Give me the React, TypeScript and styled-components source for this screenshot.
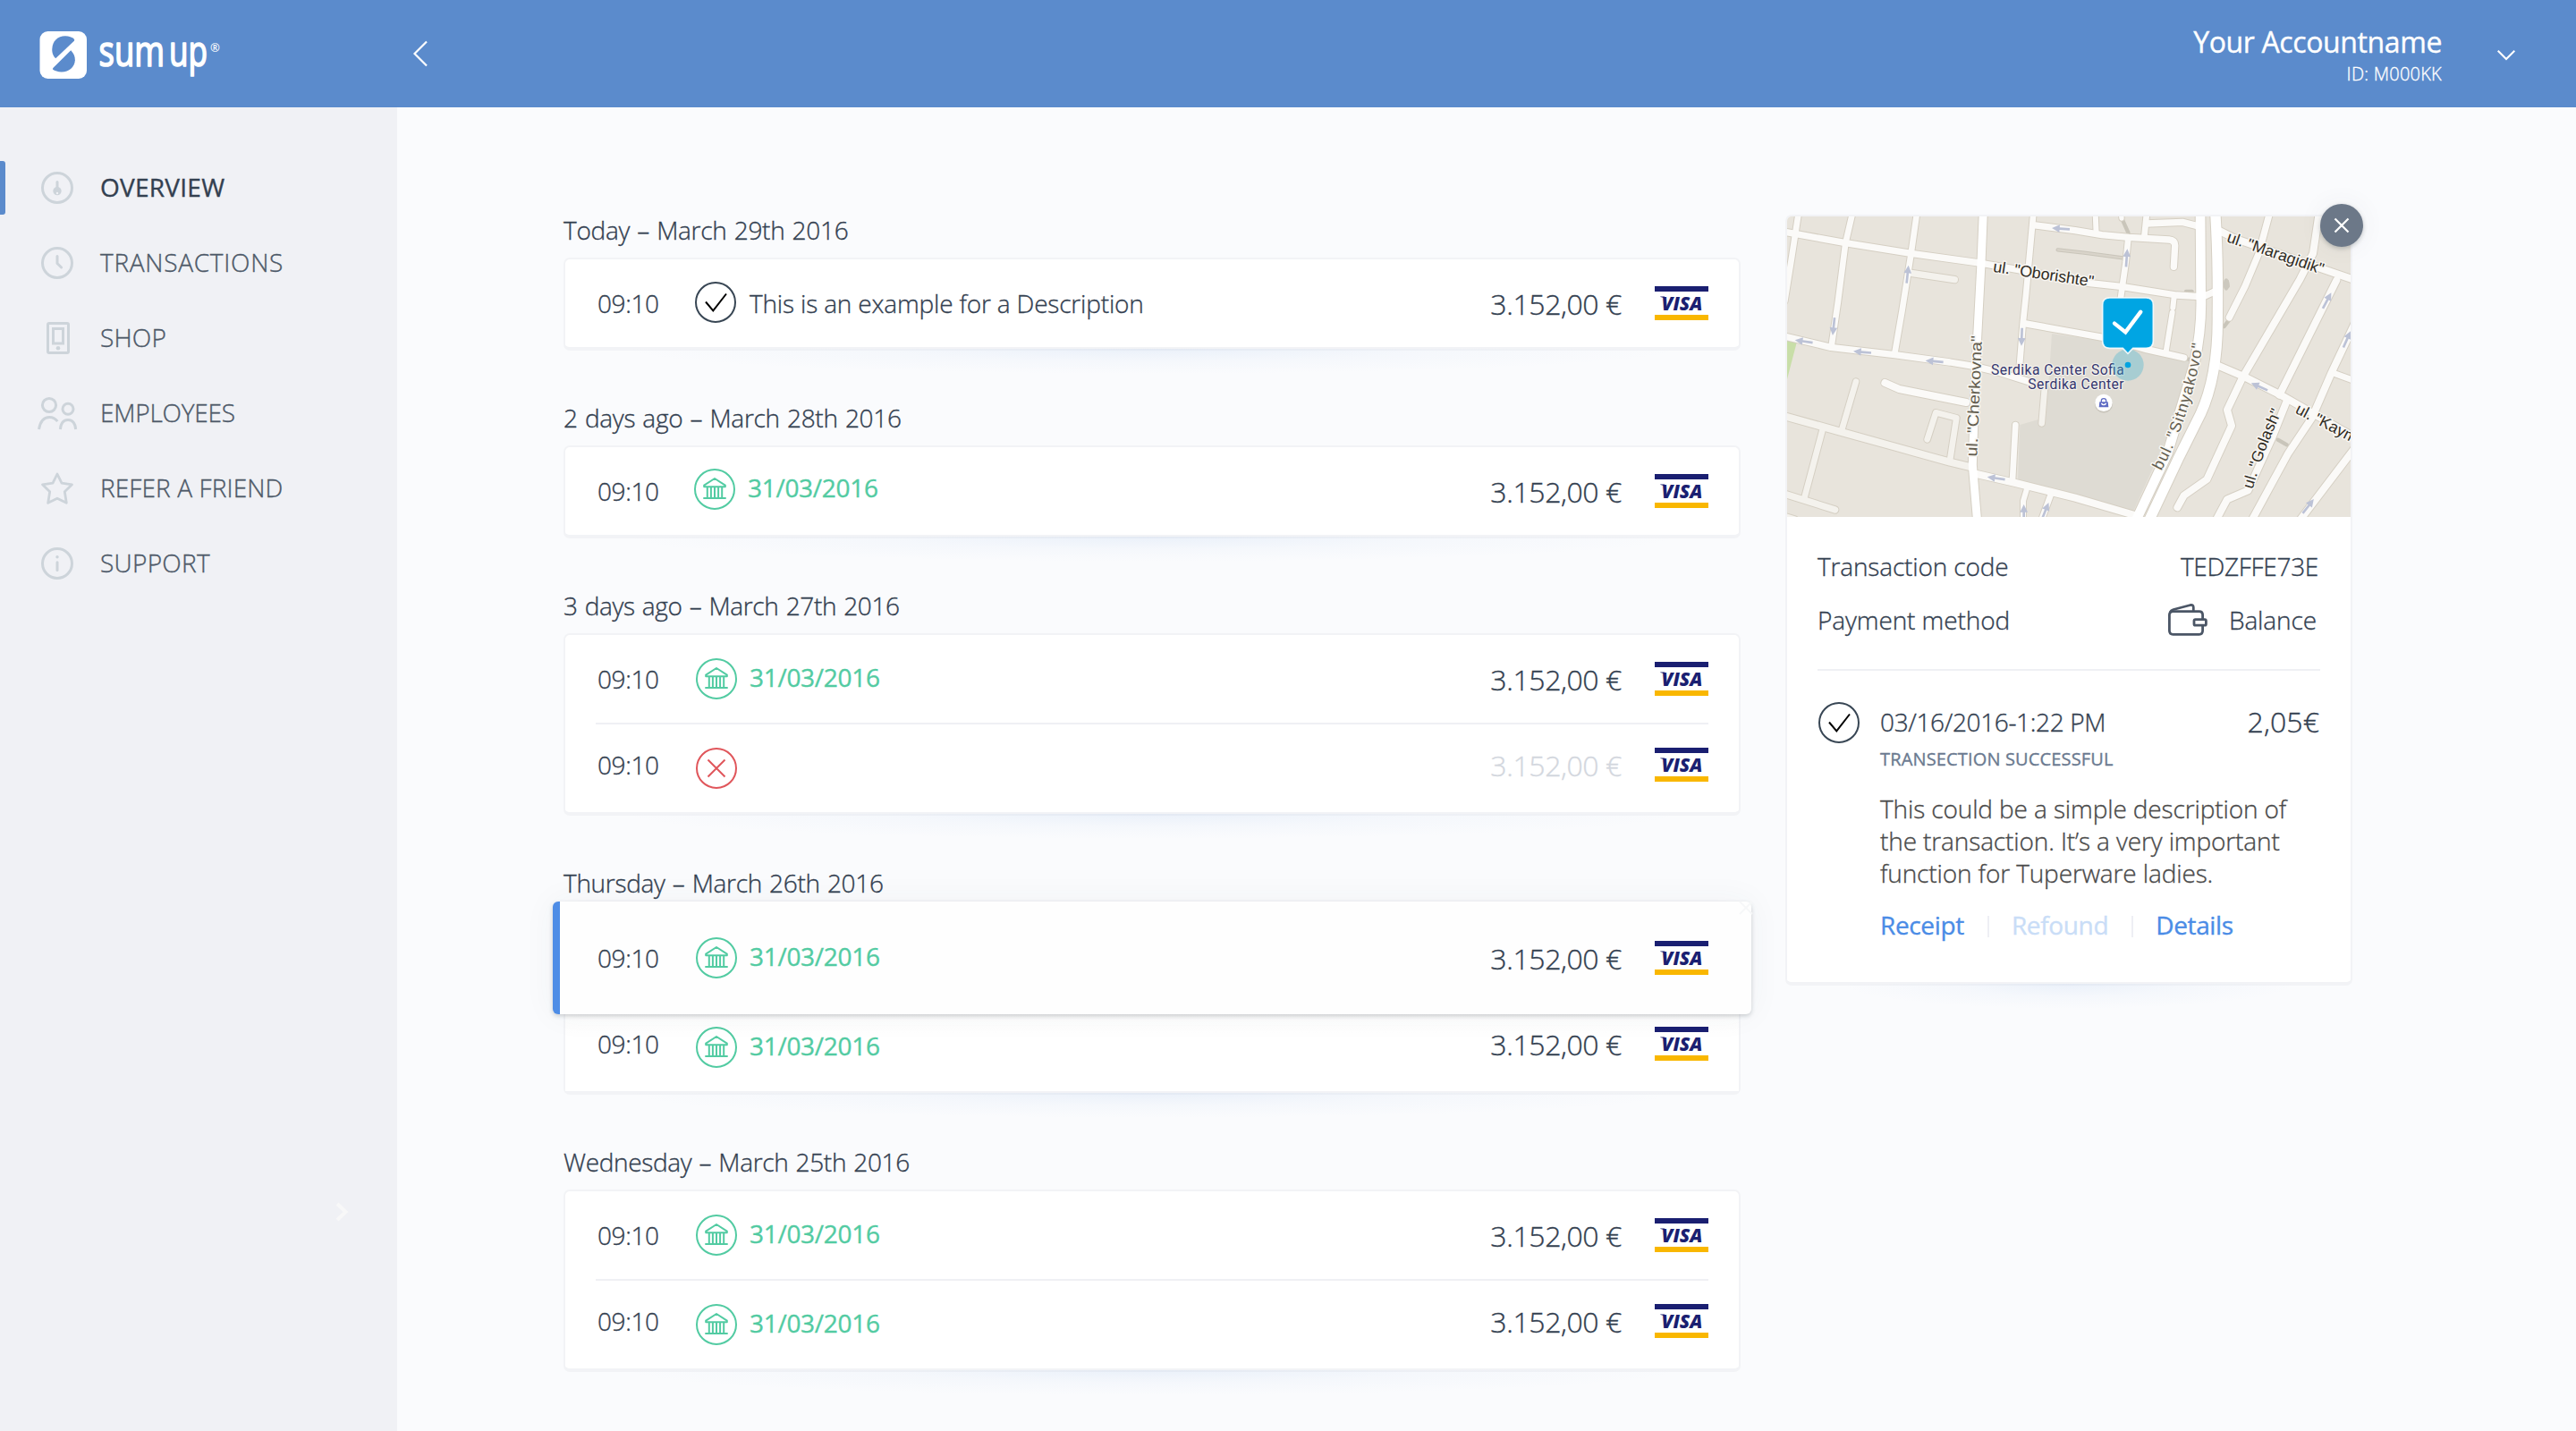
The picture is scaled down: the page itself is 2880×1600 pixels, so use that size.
import React from 'react';
import styled, { createGlobalStyle, css } from 'styled-components';

const GlobalStyle = createGlobalStyle`
  *, *::before, *::after { box-sizing: border-box; }
  html, body { margin: 0; padding: 0; }
  body {
    background: #fafbfd;
    color: #334050;
    font-family: "Open Sans", "Noto Sans", sans-serif;
    font-size: 28px;
    font-weight: 300;
    -webkit-text-stroke: 0.35px currentColor;
    overflow: hidden;
  }
  svg text { -webkit-text-stroke: initial; }
`;

const Page = styled.div`
  display: flex;
  flex-direction: column;
  width: 2880px;
  height: 1600px;
`;

/* ---------- header ---------- */

const Header = styled.header`
  display: flex;
  flex: none;
  height: 120px;
  padding: 0 68px 0 44px;
  background: #5b8bcc;
  color: #fff;
`;

const Brand = styled.div`
  width: 418px;
  padding-top: 21px;
  line-height: 0;
`;

const BackButton = styled.div`
  padding-top: 45px;
  line-height: 0;
`;

const Account = styled.div`
  margin-left: auto;
  padding-top: 27px;
  text-align: right;
`;

const AccountName = styled.div`
  font-size: 32px;
  font-weight: 400;
  line-height: 40px;
  letter-spacing: -0.38px;
`;

const AccountId = styled.div`
  margin-top: 4px;
  font-size: 20px;
  line-height: 24px;
  letter-spacing: 0.25px;
`;

const AccountToggle = styled.div`
  margin-left: 62px;
  padding-top: 54px;
  line-height: 0;
`;

/* ---------- sidebar ---------- */

const Body = styled.div`
  display: flex;
  flex: 1;
`;

const Sidebar = styled.aside`
  display: flex;
  flex-direction: column;
  justify-content: space-between;
  width: 444px;
  padding: 48px 0 234px;
  background: #f0f1f5;
`;

const NavItem = styled.div<{ $active?: boolean; $track: number }>`
  display: flex;
  align-items: center;
  height: 84px;
  color: ${p => (p.$active ? '#334050' : '#4d5968')};
  font-weight: ${p => (p.$active ? 480 : 300)};
  letter-spacing: ${p => p.$track}px;
`;

const ActiveBar = styled.span<{ $active?: boolean }>`
  width: 6px;
  height: 60px;
  margin-right: 36px;
  border-radius: 0 3px 3px 0;
  background: ${p => (p.$active ? '#5b8bcc' : 'transparent')};
`;

const NavIcon = styled.svg`
  width: 44px;
  height: 44px;
  margin-right: 26px;
  fill: none;
  stroke: #cdd4da;
  stroke-width: 3;
  overflow: visible;
`;

const NavLabel = styled.span`
  margin-bottom: 2px;
`;

const SidebarToggle = styled.div`
  align-self: flex-end;
  margin-right: 53px;
  line-height: 0;
`;

/* ---------- transactions ---------- */

const Main = styled.main`
  display: flex;
  align-items: flex-start;
  gap: 50px;
  padding: 117px 0 0 186px;
`;

const List = styled.div`
  width: 1316px;
`;

const Group = styled.section`
  & + & {
    margin-top: 55px;
  }
`;

const GroupTitle = styled.h2<{ $gap: number; $track: number }>`
  margin: 0 0 ${p => p.$gap}px;
  font-size: 28px;
  font-weight: 300;
  line-height: 40px;
  letter-spacing: ${p => p.$track}px;
  word-spacing: 1.2px;
`;

const cardBox = css`
  position: relative;
  border: 2px solid #f2f3f6;
  border-bottom-width: 4px;
  border-radius: 7px;
  background: #fff;

  &::after {
    content: '';
    position: absolute;
    top: 100%;
    left: 60px;
    right: 60px;
    height: 28px;
    margin-top: 2px;
    background: radial-gradient(ellipse 50% 100% at 50% 0, rgba(120, 165, 225, 0.12), rgba(120, 165, 225, 0.04) 50%, rgba(120, 165, 225, 0) 100%);
  }
`;

const Card = styled.div`
  ${cardBox}
`;

const Row = styled.div<{ $second?: boolean; $overlap?: boolean }>`
  display: flex;
  align-items: center;
  height: 98px;
  padding: 0 34px ${p => (p.$second ? 8 : 0)}px;

  ${p => p.$second && !p.$overlap && css`
    height: 100px;
    padding-bottom: 6px;
    &::before {
      content: '';
      align-self: flex-start;
      width: 1244px;
      height: 2px;
      margin-right: -1244px;
      background: #eff0f4;
    }
  `}

  ${p => p.$overlap && css`
    margin-top: -12px;
    background: linear-gradient(#fbfbfb, #fff 34px);
  `}
`;

const SelectedRow = styled.div`
  position: relative;
  z-index: 1;
  display: flex;
  align-items: center;
  height: 126px;
  margin: -14px -14px 0;
  padding: 0 48px 0 40px;
  border-left: 8px solid #4e8de6;
  border-radius: 6px;
  background: #fefefe;
  box-shadow: 0 2px 5px rgba(40, 50, 60, 0.22), 0 0 36px rgba(60, 70, 80, 0.05);
`;

const GhostClose = styled.svg`
  position: absolute;
  top: -1px;
  right: -2px;
`;

const Time = styled.span`
  width: 112px;
  padding-left: 2px;
  letter-spacing: -0.4px;
`;

const Status = styled.div<{ $second?: boolean; $lift?: number; $shift?: number }>`
  display: flex;
  align-items: center;
  gap: 14px;
  margin-top: ${p => (p.$second ? 8 : 0)}px;
  margin-bottom: ${p => p.$lift ?? 0}px;
  margin-left: ${p => p.$shift ?? 0}px;
`;

const PayoutDate = styled.span`
  color: #52cba2;
  font-weight: 500;
  letter-spacing: -0.3px;
  margin-bottom: 4px;
`;

const Description = styled.span`
  margin-top: 2px;
  margin-left: 1px;
  letter-spacing: -0.17px;
`;

const Amount = styled.span<{ $muted?: boolean }>`
  margin-left: auto;
  margin-right: 37px;
  color: ${p => (p.$muted ? '#d3d7de' : '#334050')};
  font-size: 32px;
  letter-spacing: -0.4px;
`;

const StatusIcon = styled.svg`
  flex: none;
  width: 46px;
  height: 46px;
  fill: none;
  stroke-width: 2;
`;

/* ---------- detail panel ---------- */

const Detail = styled.aside`
  ${cardBox}
  width: 634px;
  height: 862px;
  margin-top: 3px;
`;

const MapSvg = styled.svg`
  display: block;
  width: 630px;
  height: 336px;
  border-radius: 5px 5px 0 0;
`;

const CloseButton = styled.button`
  position: absolute;
  top: -14px;
  right: -14px;
  display: flex;
  align-items: center;
  justify-content: center;
  width: 48px;
  height: 48px;
  padding: 0;
  border: 0;
  border-radius: 50%;
  background: #6c7888;
  box-shadow: 0 2px 5px rgba(40, 50, 60, 0.25), 0 0 30px rgba(60, 70, 80, 0.06);
`;

const Facts = styled.div`
  margin: 0 34px;
  padding: 25px 2px 25px 0;
  border-bottom: 2px solid #eff0f4;
`;

const Fact = styled.div`
  display: flex;
  align-items: center;
  height: 60px;
`;

const FactLabel = styled.span<{ $track: number }>`
  letter-spacing: ${p => p.$track}px;
`;

const FactValue = styled.span<{ $track: number; $inset: number }>`
  display: flex;
  align-items: center;
  gap: 24px;
  margin-left: auto;
  margin-right: ${p => p.$inset}px;
  letter-spacing: ${p => p.$track}px;
`;

const Event = styled.div`
  display: grid;
  grid-template-columns: 46px 1fr auto;
  column-gap: 23px;
  margin: 0 35px;
  padding-top: 35px;
`;

const EventDate = styled.div`
  line-height: 44px;
  letter-spacing: -0.35px;
`;

const EventAmount = styled.div`
  font-size: 32px;
  line-height: 44px;
  letter-spacing: 0.1px;
`;

const EventBody = styled.div`
  grid-column: 2 / 4;
`;

const EventState = styled.div`
  margin-top: 5px;
  color: #6b7a90;
  font-size: 20px;
  font-weight: 400;
  line-height: 26px;
  letter-spacing: 0.15px;
`;

const EventText = styled.p`
  margin: 24px 0 0;
  color: #4a4a4a;
  line-height: 36px;
  white-space: nowrap;
  letter-spacing: -0.12px;
`;

const Links = styled.div`
  display: flex;
  align-items: center;
  height: 40px;
  margin-top: 20px;
`;

const Link = styled.a<{ $muted?: boolean }>`
  color: ${p => (p.$muted ? '#c9ddf7' : '#4a8ce6')};
  font-weight: 400;
  letter-spacing: -0.35px;
`;

const LinkDivider = styled.span`
  width: 2px;
  height: 24px;
  margin: 4px 25px 0 26px;
  background: #eeeff4;
`;

/* ---------- drawings ---------- */

const Logo = () => (
  <svg width="210" height="74" viewBox="0 -14 210 74" fill="#fff">
    <rect x="0.5" y="0" width="52.5" height="53" rx="9" />
    <g transform="translate(0.6 0) scale(0.333)" fill="#5b8bcc">
      <path d="M53 91C42 80 41 70 41 60C42 33 60 16 85 16C98 16 108 20 115 26Q117 29 115 32Z" />
      <path d="M104 64C114 75 118 85 118 97C117 120 98 137 73 137C60 137 50 133 43 128Q42 125 45 122Z" />
    </g>
    <g fontFamily='"Open Sans", sans-serif' fontSize="47" fontWeight="400" stroke="#fff" strokeWidth="1.7" strokeLinejoin="round">
      <text x="66.5" y="38.5" textLength="73.5" lengthAdjust="spacingAndGlyphs">sum</text>
      <text x="145" y="38.5" textLength="43" lengthAdjust="spacingAndGlyphs">up</text>
    </g>
    <text x="191" y="23" fontFamily='"Open Sans", sans-serif' fontSize="13" fontWeight="600">®</text>
  </svg>
);

const navDrawings: Record<string, React.ReactNode> = {
  overview: (
    <>
      <circle cx="22" cy="22" r="16.5" />
      <path d="M22 15.5V22" strokeLinecap="round" />
      <circle cx="22" cy="25.6" r="3.4" strokeWidth="2.6" fill="#cdd4da" />
      <circle cx="22" cy="28" r="1.2" fill="#f0f1f5" stroke="none" />
    </>
  ),
  clock: (
    <>
      <circle cx="22" cy="22" r="16.5" />
      <path d="M22 14.5V22.5L26.6 27" strokeLinecap="round" strokeLinejoin="round" />
    </>
  ),
  shop: (
    <>
      <rect x="11.5" y="5.5" width="23" height="33" rx="1.5" />
      <rect x="17.5" y="11.5" width="11" height="16.5" />
      <circle cx="23" cy="33.3" r="2.3" fill="#cdd4da" stroke="none" />
    </>
  ),
  people: (
    <>
      <circle cx="13" cy="13" r="7.6" />
      <circle cx="34" cy="17.3" r="6" />
      <path d="M1.5 40C3 31 7.5 26.5 13.3 26.5C17 26.5 19.8 28 22.3 31.2" />
      <path d="M25.4 40C26 33 29.5 29.5 34 29.5C38.5 29.5 42 33 42.7 40" />
    </>
  ),
  star: (
    <path
      d="M22 6L27 16.2L38.5 17.8L30.3 25.8L32.3 38.3L22 33.2L11.7 38.3L13.7 25.8L5.5 17.8L17 16.2Z"
      strokeLinejoin="round"
      strokeWidth="2.8"
    />
  ),
  info: (
    <>
      <circle cx="22" cy="22" r="16.5" />
      <path d="M22 20.7V29.5" strokeLinecap="round" />
      <circle cx="22" cy="14.7" r="1.7" fill="#cdd4da" stroke="none" />
    </>
  ),
};

const CheckIcon = () => (
  <StatusIcon viewBox="0 0 46 46">
    <circle cx="23" cy="23" r="22" stroke="#384654" />
    <path d="M12 22.5L20.3 32.3L35 13.5" stroke="#000" />
  </StatusIcon>
);

const BankIcon = () => (
  <StatusIcon viewBox="0 0 46 46" stroke="#52cba2">
    <circle cx="23" cy="23" r="22" />
    <path d="M11.2 18.6L23 11L34.8 18.6V20.2H11.2Z" strokeLinejoin="round" />
    <path d="M14.8 20V33M18.9 20V33M23 20V33M27.1 20V33M31.2 20V33M10.3 33H35.7" />
  </StatusIcon>
);

const FailIcon = () => (
  <StatusIcon viewBox="0 0 46 46" stroke="#e0565b">
    <circle cx="23" cy="23" r="22" />
    <path d="M13.5 13.5L32.5 32.5M32.5 13.5L13.5 32.5" />
  </StatusIcon>
);

const VisaLogo = () => (
  <svg width="60" height="38" viewBox="0 0 60 38">
    <rect width="60" height="6" fill="#1a1f71" />
    <rect y="32" width="60" height="6" fill="#f9b700" />
    <text
      x="7.5"
      y="26.6"
      fill="#1a1f71"
      fontFamily='"Open Sans", sans-serif'
      fontSize="21"
      fontStyle="italic"
      fontWeight="800"
      textLength="46"
      lengthAdjust="spacingAndGlyphs"
    >
      VISA
    </text>
    <path d="M6.3 11.4H11L12 14.5Q9.5 12.3 6.3 11.9Z" fill="#1a1f71" />
  </svg>
);

const WalletIcon = () => (
  <svg width="44" height="36" viewBox="0 0 44 36" fill="none" stroke="#4b5666" strokeWidth="2.8" strokeLinejoin="round">
    <path d="M38.6 17V12.5Q38.6 8.6 34.7 8.6H5.5Q1.4 8.6 1.4 12.5V30Q1.4 34.3 5.5 34.3H34.7Q38.6 34.3 38.6 30V25" />
    <path d="M2.4 9.5Q3 7.4 6 6.5L25 1.5Q28.3 1 28.3 4.2V8.6" />
    <rect x="29" y="17.6" width="13.4" height="6.6" rx="1.5" />
  </svg>
);

/* ---------- street map ---------- */

type Road = { d: string; w: number; c: string };

const MAJOR = '#ffffff';
const MINOR = '#fbfaf8';
const LANE = '#f4f2ed';

const roads: Road[] = [
  { d: 'M54 738L240 790L420 840L600 890L675 908', w: 24, c: LANE },
  { d: 'M172 785L112 1010', w: 20, c: LANE },
  { d: 'M40 995L215 1050', w: 22, c: LANE },
  { d: 'M40 1070L80 1082', w: 20, c: LANE },
  { d: 'M285 620L238 780', w: 20, c: LANE },
  { d: 'M524 814L553 724L622 742L600 885', w: 20, c: LANE },
  { d: 'M918 640L908 760', w: 20, c: LANE },
  { d: 'M470 256L616 278', w: 22, c: LANE },
  { d: 'M92 56L70 200L46 350', w: 20, c: MINOR },
  { d: 'M273 56L250 155L225 350L203 500', w: 20, c: MINOR },
  { d: 'M489 56L470 190L440 380L415 525', w: 20, c: MINOR },
  { d: 'M40 117L250 155L470 190L700 222L830 245L1070 290L1180 302L1360 330L1440 335', w: 22, c: MINOR },
  { d: 'M40 467L200 505L415 530L600 555L680 568L770 590L870 622', w: 22, c: MINOR },
  { d: 'M382 624L430 645L655 690', w: 24, c: MINOR },
  { d: 'M880 56L855 330L845 425L832 590', w: 20, c: MINOR },
  { d: 'M880 95L1020 113L1110 128L1200 136L1335 144Q1356 146 1355 165L1351 235', w: 22, c: MINOR },
  { d: 'M850 425L990 450L1130 475L1260 512L1385 540', w: 22, c: MINOR },
  { d: 'M690 930L820 960L940 990L1020 1010L1220 1068', w: 24, c: MINOR },
  { d: 'M820 765L810 950', w: 20, c: MINOR },
  { d: 'M858 980L846 1020L846 1090', w: 18, c: MINOR },
  { d: 'M938 1000L905 1090', w: 20, c: MINOR },
  { d: 'M1088 56L1091 125', w: 18, c: MINOR },
  { d: 'M1174 50L1176 72', w: 16, c: MINOR },
  { d: 'M1260 56L1252 135', w: 20, c: MINOR },
  { d: 'M1260 90L1380 85L1430 98', w: 22, c: MINOR },
  { d: 'M1198 140L1190 220L1172 345', w: 20, c: MINOR },
  { d: 'M1352 335L1348 372', w: 18, c: MINOR },
  { d: 'M1346 388L1324 525', w: 18, c: MINOR },
  { d: 'M1450 335L1500 312', w: 22, c: MINOR },
  { d: 'M1500 112L1560 142L1700 190L1850 242L1960 280', w: 24, c: MINOR },
  { d: 'M1672 56L1636 190L1590 300L1537 405', w: 22, c: MINOR },
  { d: 'M1838 56L1818 190L1775 275L1582 605L1530 715L1545 768L1462 948L1385 1002L1363 1042', w: 24, c: MINOR },
  { d: 'M1897 280L1705 665', w: 24, c: MINOR },
  { d: 'M1728 690L1680 810L1600 985L1530 1015L1490 1090', w: 24, c: MINOR },
  { d: 'M1490 562L1590 605L1710 665L1780 705L1960 808', w: 24, c: MINOR },
  { d: 'M1960 420L1880 590L1815 740L1735 860L1610 1090', w: 24, c: MINOR },
  { d: 'M1882 590L1960 618', w: 20, c: MINOR },
  { d: 'M1960 840L1770 1090', w: 24, c: MINOR },
  { d: 'M712 50L705 222L692 470L682 700L676 900L692 1090', w: 27, c: MAJOR },
  { d: 'M1440 50L1442 330Q1446 440 1420 560L1330 860L1222 1090', w: 32, c: MAJOR },
  { d: 'M1490 50Q1500 200 1498 400Q1500 600 1440 730L1365 880L1266 1090', w: 34, c: MAJOR },
];

const arrows = [
  [110, 485, -172], [306, 521, -175], [548, 552, -175], [755, 944, -172], [972, 107, -176],
  [458, 260, -84], [210, 435, 96], [841, 470, 92], [848, 1062, -90], [920, 1054, -68],
  [1193, 205, -86], [1865, 348, -62], [1932, 478, -66], [1638, 637, -156], [1802, 1038, -52],
];

const LABEL_DARK = '#2f2b23';
const LABEL_SOFT = '#625c4e';

const StreetMap = () => (
  <MapSvg viewBox="54 66 1890 1008" preserveAspectRatio="none">
    <rect x="54" y="66" width="1890" height="1008" fill="#e8e4dc" />
    <path d="M942 460L1130 485L1420 552L1340 780L1212 1062L990 1002L828 955L835 765L920 740L930 640Z" fill="#dedbd3" />
    <path d="M54 480L86 490L54 612Z" fill="#c8dea8" />
    <g fill="none" stroke="#c9c5ba" strokeWidth="13" strokeLinecap="round">
      <path d="M962 178L1050 188L1180 205M1180 80L1198 120M1392 318H1412M1532 300L1530 285M1520 435L1535 415M1400 545L1420 550M1700 815L1730 832" />
    </g>
    <g fill="none" stroke="#d9d4ca" strokeWidth="7" strokeLinecap="round">
      <path d="M962 178L1050 188L1180 205" />
    </g>
    <ellipse cx="1527" cy="294" rx="10" ry="20" fill="#ccc8be" />
    <g fill="none" strokeLinecap="round" strokeLinejoin="round">
      {roads.map((r, i) => (
        <path key={i} d={r.d} stroke="#d5cfc3" strokeWidth={r.w + 6} />
      ))}
      {roads.map((r, i) => (
        <path key={i} d={r.d} stroke={r.c} strokeWidth={r.w} />
      ))}
    </g>
    <g fill="#bcc2d6">
      {arrows.map(([x, y, a], i) => (
        <path key={i} d="M-30 -4H4V-13L30 0L4 13V4H-30Z" transform={`translate(${x} ${y}) rotate(${a})`} />
      ))}
    </g>
    <defs>
      <path id="sitnyakovo" d="M1309 920Q1408 740 1450 485" />
      <path id="golash" d="M1616 982Q1652 850 1713 722" />
    </defs>
    <g
      fontFamily='"Liberation Sans", Arial, sans-serif'
      fontSize="53"
      fill={LABEL_DARK}
      stroke="#f8f6f2"
      strokeWidth="9"
      strokeLinejoin="round"
      paintOrder="stroke"
    >
      <text transform="translate(743 251) rotate(8.6)" textLength="341" lengthAdjust="spacingAndGlyphs">ul. "Oborishte"</text>
      <text transform="translate(1526 150) rotate(19)" textLength="340" lengthAdjust="spacingAndGlyphs">ul. "Maragidik"</text>
      <text transform="translate(1756 724) rotate(27.5)">ul. "Kaym</text>
      <text>
        <textPath href="#golash" textLength="278">ul. "Golash"</textPath>
      </text>
      <g fill={LABEL_SOFT}>
        <text transform="translate(691 872) rotate(-87.6)" textLength="406" lengthAdjust="spacingAndGlyphs">ul. "Cherkovna"</text>
        <text>
          <textPath href="#sitnyakovo" textLength="450">bul. "Sitnyakovo"</textPath>
        </text>
      </g>
    </g>
    <g
      fontFamily="Roboto, sans-serif"
      fontSize="47"
      fontWeight="430"
      fill="#35376f"
      stroke="#f3f1ec"
      strokeWidth="7"
      strokeLinejoin="round"
      paintOrder="stroke"
    >
      <text x="738" y="597" textLength="446">Serdika Center Sofia</text>
      <text x="862" y="646" textLength="322">Serdika Center</text>
    </g>
    <circle cx="1116" cy="695" r="30" fill="#bbb7ae" opacity="0.6" />
    <circle cx="1116" cy="691" r="29" fill="#fff" />
    <path d="M1102 688H1130L1132 706H1100Z" fill="#5f6cc4" />
    <path d="M1108 690V684Q1108 677 1116 677Q1124 677 1124 684V690" fill="none" stroke="#5f6cc4" strokeWidth="4" />
    <path d="M1108 693Q1116 703 1124 693" fill="none" stroke="#fff" strokeWidth="4" />
    <circle cx="1197" cy="564" r="53" fill="#3fb4d0" opacity="0.34" />
    <circle cx="1197" cy="564" r="10" fill="#00a3e0" />
    <path
      d="M1136 339H1258Q1282 339 1282 363V484Q1282 508 1258 508H1214L1197 526L1180 508H1136Q1112 508 1112 484V363Q1112 339 1136 339Z"
      fill="#00a5e3"
      stroke="#fff"
      strokeOpacity="0.85"
      strokeWidth="5"
    />
    <path d="M1152 425L1189 454L1240 386" fill="none" stroke="#fff" strokeWidth="13" strokeLinecap="round" />
  </MapSvg>
);

/* ---------- content ---------- */

const nav = [
  { icon: 'overview', label: 'OVERVIEW', active: true, track: 0.25 },
  { icon: 'clock', label: 'TRANSACTIONS', track: 0.72 },
  { icon: 'shop', label: 'SHOP', track: 0.2 },
  { icon: 'people', label: 'EMPLOYEES', track: -0.2 },
  { icon: 'star', label: 'REFER A FRIEND', track: 0.12 },
  { icon: 'info', label: 'SUPPORT', track: 0.3 },
];

type Kind = 'check' | 'bank' | 'fail';
type Transaction = { kind: Kind; selected?: boolean; lift?: number; shift?: number };

const groups: { title: string; gap: number; track: number; rows: Transaction[] }[] = [
  { title: 'Today – March 29th 2016', gap: 11, track: -0.28, rows: [{ kind: 'check', lift: 2, shift: -1 }] },
  { title: '2 days ago – March 28th 2016', gap: 11, track: -0.28, rows: [{ kind: 'bank', lift: 4, shift: -2 }] },
  { title: '3 days ago – March 27th 2016', gap: 11, track: -0.35, rows: [{ kind: 'bank' }, { kind: 'fail' }] },
  { title: 'Thursday – March 26th 2016', gap: 13, track: -0.3, rows: [{ kind: 'bank', selected: true }, { kind: 'bank' }] },
  { title: 'Wednesday – March 25th 2016', gap: 11, track: -0.33, rows: [{ kind: 'bank' }, { kind: 'bank' }] },
];

const RowContent = ({ t, second }: { t: Transaction; second: boolean }) => (
  <>
    <Time>09:10</Time>
    <Status $second={second} $lift={t.lift} $shift={t.shift}>
      {t.kind === 'check' && <CheckIcon />}
      {t.kind === 'bank' && <BankIcon />}
      {t.kind === 'fail' && <FailIcon />}
      {t.kind === 'check' && <Description>This is an example for a Description</Description>}
      {t.kind === 'bank' && <PayoutDate>31/03/2016</PayoutDate>}
    </Status>
    <Amount $muted={t.kind === 'fail'}>3.152,00 €</Amount>
    <VisaLogo />
  </>
);

export default function App() {
  return (
    <Page>
      <GlobalStyle />
      <Header>
        <Brand><Logo /></Brand>
        <BackButton>
          <svg width="18" height="30" fill="none" stroke="#fff" strokeWidth="2.2">
            <path d="M15 1.5L1.5 15L15 28.5" />
          </svg>
        </BackButton>
        <Account>
          <AccountName>Your Accountname</AccountName>
          <AccountId>ID: M000KK</AccountId>
        </Account>
        <AccountToggle>
          <svg width="20" height="16" fill="none" stroke="#fff" strokeWidth="2">
            <path d="M0.7 2.7L10 12L19.3 2.7" />
          </svg>
        </AccountToggle>
      </Header>
      <Body>
        <Sidebar>
          <nav>
            {nav.map(n => (
              <NavItem key={n.label} $active={n.active} $track={n.track}>
                <ActiveBar $active={n.active} />
                <NavIcon viewBox="0 0 44 44">{navDrawings[n.icon]}</NavIcon>
                <NavLabel>{n.label}</NavLabel>
              </NavItem>
            ))}
          </nav>
          <SidebarToggle>
            <svg width="16" height="22" fill="none" stroke="#f8f8f8" strokeWidth="4">
              <path d="M2 2L11.5 11L2 20" />
            </svg>
          </SidebarToggle>
        </Sidebar>
        <Main>
          <List>
            {groups.map(g => (
              <Group key={g.title}>
                <GroupTitle $gap={g.gap} $track={g.track}>{g.title}</GroupTitle>
                <Card>
                  {g.rows.map((t, i) =>
                    t.selected ? (
                      <SelectedRow key={i}>
                        <RowContent t={t} second={false} />
                        <GhostClose width="16" height="16" stroke="#f6f7f8" strokeWidth="2">
                          <path d="M1 1L15 15M15 1L1 15" />
                        </GhostClose>
                      </SelectedRow>
                    ) : (
                      <Row key={i} $second={i > 0} $overlap={i > 0 && g.rows[i - 1].selected}>
                        <RowContent t={t} second={i > 0} />
                      </Row>
                    ),
                  )}
                </Card>
              </Group>
            ))}
          </List>
          <Detail>
            <StreetMap />
            <CloseButton aria-label="Close">
              <svg width="18" height="18" stroke="#fff" strokeWidth="2.2">
                <path d="M1.5 1.5L16.5 16.5M16.5 1.5L1.5 16.5" />
              </svg>
            </CloseButton>
            <Facts>
              <Fact>
                <FactLabel $track={-0.15}>Transaction code</FactLabel>
                <FactValue $track={-0.3} $inset={0}>TEDZFFE73E</FactValue>
              </Fact>
              <Fact>
                <FactLabel $track={-0.1}>Payment method</FactLabel>
                <FactValue $track={-0.1} $inset={2}><WalletIcon />Balance</FactValue>
              </Fact>
            </Facts>
            <Event>
              <CheckIcon />
              <EventDate>03/16/2016-1:22 PM</EventDate>
              <EventAmount>2,05€</EventAmount>
              <EventBody>
                <EventState>TRANSECTION SUCCESSFUL</EventState>
                <EventText>
                  This could be a simple description of<br />
                  the transaction. It’s a very important<br />
                  function for Tuperware ladies.
                </EventText>
                <Links>
                  <Link>Receipt</Link>
                  <LinkDivider />
                  <Link $muted>Refound</Link>
                  <LinkDivider />
                  <Link>Details</Link>
                </Links>
              </EventBody>
            </Event>
          </Detail>
        </Main>
      </Body>
    </Page>
  );
}
